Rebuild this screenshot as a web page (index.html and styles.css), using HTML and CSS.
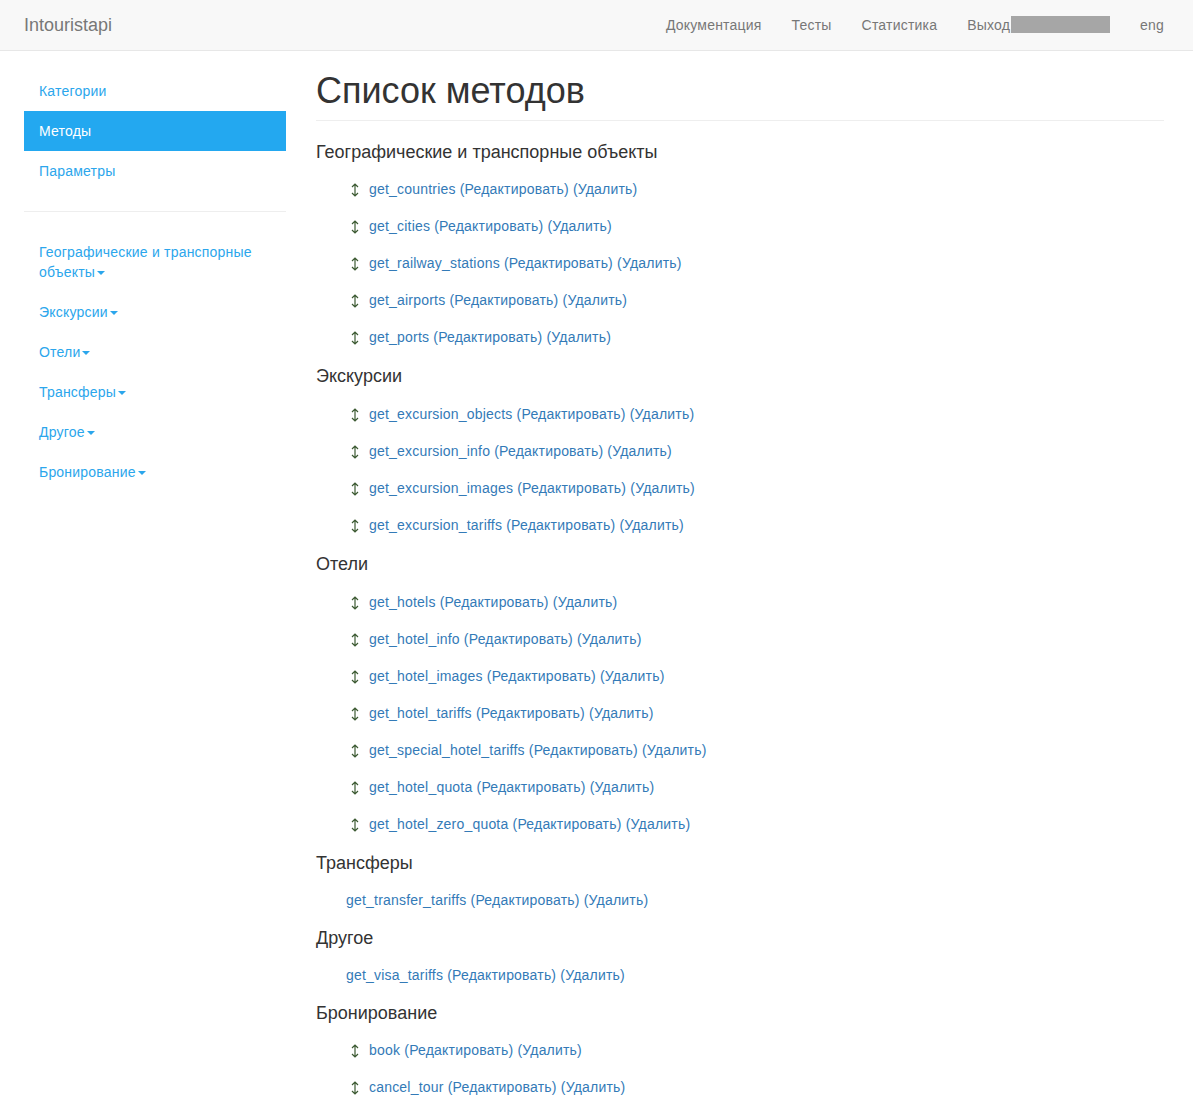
FILE: index.html
```html
<!DOCTYPE html>
<html lang="ru">
<head>
  <meta charset="UTF-8" />
  <title>Intouristapi</title>
  <link rel="stylesheet" href="styles.css">
</head>
<body>

  <nav class="navbar">
    <a class="brand" href="#">Intouristapi</a>
    <ul class="nav-right">
      <li><a href="#">Документация</a></li>
      <li><a href="#">Тесты</a></li>
      <li><a href="#">Статистика</a></li>
      <li><a href="#">Выход<span class="user-mask"></span></a></li>
      <li><a href="#">eng</a></li>
    </ul>
  </nav>

  <div class="layout">
    <aside class="sidebar">
      <ul class="pills">
        <li><a href="#">Категории</a></li>
        <li class="active"><a href="#">Методы</a></li>
        <li><a href="#">Параметры</a></li>
      </ul>
      <hr class="divider" />
      <ul class="pills">
        <li><a href="#">Географические и транспорные объекты<span class="caret"></span></a></li>
        <li><a href="#">Экскурсии<span class="caret"></span></a></li>
        <li><a href="#">Отели<span class="caret"></span></a></li>
        <li><a href="#">Трансферы<span class="caret"></span></a></li>
        <li><a href="#">Другое<span class="caret"></span></a></li>
        <li><a href="#">Бронирование<span class="caret"></span></a></li>
      </ul>
    </aside>

    <main class="content">
      <div class="page-header">
        <h1>Список методов</h1>
      </div>

      <h4>Географические и транспорные объекты</h4>
      <ul class="methods">
        <li><svg class="move" viewBox="0 0 8 14"><path d="M4 1v12M1 4l3-3 3 3M1 10l3 3 3-3"/></svg><a href="#">get_countries</a> <a href="#">(Редактировать)</a> <a href="#">(Удалить)</a></li>
        <li><svg class="move" viewBox="0 0 8 14"><path d="M4 1v12M1 4l3-3 3 3M1 10l3 3 3-3"/></svg><a href="#">get_cities</a> <a href="#">(Редактировать)</a> <a href="#">(Удалить)</a></li>
        <li><svg class="move" viewBox="0 0 8 14"><path d="M4 1v12M1 4l3-3 3 3M1 10l3 3 3-3"/></svg><a href="#">get_railway_stations</a> <a href="#">(Редактировать)</a> <a href="#">(Удалить)</a></li>
        <li><svg class="move" viewBox="0 0 8 14"><path d="M4 1v12M1 4l3-3 3 3M1 10l3 3 3-3"/></svg><a href="#">get_airports</a> <a href="#">(Редактировать)</a> <a href="#">(Удалить)</a></li>
        <li><svg class="move" viewBox="0 0 8 14"><path d="M4 1v12M1 4l3-3 3 3M1 10l3 3 3-3"/></svg><a href="#">get_ports</a> <a href="#">(Редактировать)</a> <a href="#">(Удалить)</a></li>
      </ul>

      <h4>Экскурсии</h4>
      <ul class="methods">
        <li><svg class="move" viewBox="0 0 8 14"><path d="M4 1v12M1 4l3-3 3 3M1 10l3 3 3-3"/></svg><a href="#">get_excursion_objects</a> <a href="#">(Редактировать)</a> <a href="#">(Удалить)</a></li>
        <li><svg class="move" viewBox="0 0 8 14"><path d="M4 1v12M1 4l3-3 3 3M1 10l3 3 3-3"/></svg><a href="#">get_excursion_info</a> <a href="#">(Редактировать)</a> <a href="#">(Удалить)</a></li>
        <li><svg class="move" viewBox="0 0 8 14"><path d="M4 1v12M1 4l3-3 3 3M1 10l3 3 3-3"/></svg><a href="#">get_excursion_images</a> <a href="#">(Редактировать)</a> <a href="#">(Удалить)</a></li>
        <li><svg class="move" viewBox="0 0 8 14"><path d="M4 1v12M1 4l3-3 3 3M1 10l3 3 3-3"/></svg><a href="#">get_excursion_tariffs</a> <a href="#">(Редактировать)</a> <a href="#">(Удалить)</a></li>
      </ul>

      <h4>Отели</h4>
      <ul class="methods">
        <li><svg class="move" viewBox="0 0 8 14"><path d="M4 1v12M1 4l3-3 3 3M1 10l3 3 3-3"/></svg><a href="#">get_hotels</a> <a href="#">(Редактировать)</a> <a href="#">(Удалить)</a></li>
        <li><svg class="move" viewBox="0 0 8 14"><path d="M4 1v12M1 4l3-3 3 3M1 10l3 3 3-3"/></svg><a href="#">get_hotel_info</a> <a href="#">(Редактировать)</a> <a href="#">(Удалить)</a></li>
        <li><svg class="move" viewBox="0 0 8 14"><path d="M4 1v12M1 4l3-3 3 3M1 10l3 3 3-3"/></svg><a href="#">get_hotel_images</a> <a href="#">(Редактировать)</a> <a href="#">(Удалить)</a></li>
        <li><svg class="move" viewBox="0 0 8 14"><path d="M4 1v12M1 4l3-3 3 3M1 10l3 3 3-3"/></svg><a href="#">get_hotel_tariffs</a> <a href="#">(Редактировать)</a> <a href="#">(Удалить)</a></li>
        <li><svg class="move" viewBox="0 0 8 14"><path d="M4 1v12M1 4l3-3 3 3M1 10l3 3 3-3"/></svg><a href="#">get_special_hotel_tariffs</a> <a href="#">(Редактировать)</a> <a href="#">(Удалить)</a></li>
        <li><svg class="move" viewBox="0 0 8 14"><path d="M4 1v12M1 4l3-3 3 3M1 10l3 3 3-3"/></svg><a href="#">get_hotel_quota</a> <a href="#">(Редактировать)</a> <a href="#">(Удалить)</a></li>
        <li><svg class="move" viewBox="0 0 8 14"><path d="M4 1v12M1 4l3-3 3 3M1 10l3 3 3-3"/></svg><a href="#">get_hotel_zero_quota</a> <a href="#">(Редактировать)</a> <a href="#">(Удалить)</a></li>
      </ul>

      <h4>Трансферы</h4>
      <ul class="methods">
        <li class="plain"><a href="#">get_transfer_tariffs</a> <a href="#">(Редактировать)</a> <a href="#">(Удалить)</a></li>
      </ul>

      <h4>Другое</h4>
      <ul class="methods">
        <li class="plain"><a href="#">get_visa_tariffs</a> <a href="#">(Редактировать)</a> <a href="#">(Удалить)</a></li>
      </ul>

      <h4>Бронирование</h4>
      <ul class="methods">
        <li><svg class="move" viewBox="0 0 8 14"><path d="M4 1v12M1 4l3-3 3 3M1 10l3 3 3-3"/></svg><a href="#">book</a> <a href="#">(Редактировать)</a> <a href="#">(Удалить)</a></li>
        <li><svg class="move" viewBox="0 0 8 14"><path d="M4 1v12M1 4l3-3 3 3M1 10l3 3 3-3"/></svg><a href="#">cancel_tour</a> <a href="#">(Редактировать)</a> <a href="#">(Удалить)</a></li>
      </ul>
    </main>
  </div>

</body>
</html>
```

FILE: styles.css
```css
body {
  margin: 0;
  font-family: 'Liberation Sans', Arial, sans-serif;
  font-size: 14px;
  line-height: 20px;
  letter-spacing: 0.2px;
  color: #333;
  background-color: #fff;
}

a {
  text-decoration: none;
}

ul {
  list-style: none;
  margin: 0;
  padding: 0;
}

/* top bar */
.navbar {
  display: flex;
  align-items: center;
  justify-content: space-between;
  height: 50px;
  padding: 0 14px 0 24px;
  background-color: #f8f8f8;
  border-bottom: 1px solid #e7e7e7;
}

.brand {
  font-size: 18px;
  letter-spacing: 0;
  color: #777;
}

.nav-right {
  display: flex;
}

.nav-right a {
  display: block;
  padding: 15px;
  color: #777;
}

.user-mask {
  display: inline-block;
  width: 99px;
  height: 17px;
  margin-left: 1px;
  vertical-align: -3px;
  background-color: #a6a6a6;
}

/* page body */
.layout {
  display: flex;
  padding: 0 29px 0 24px;
}

.sidebar {
  width: 262px;
  flex-shrink: 0;
  padding-top: 20px;
}

.pills a {
  display: block;
  padding: 10px 15px;
  color: #2ba6ec;
}

.pills .active a {
  background-color: #23a8f0;
  color: #fff;
}

.divider {
  margin: 20px 0;
  border: 0;
  border-top: 1px solid #eee;
}

.caret {
  display: inline-block;
  width: 0;
  height: 0;
  margin-left: 2px;
  vertical-align: middle;
  border-top: 4px solid;
  border-left: 4px solid transparent;
  border-right: 4px solid transparent;
}

.content {
  flex: 1;
  margin-left: 30px;
}

.page-header {
  padding-bottom: 9px;
  margin-bottom: 21px;
  border-bottom: 1px solid #eee;
}

h1 {
  margin: 20px 0 0;
  font-size: 36px;
  font-weight: normal;
  line-height: 1.1;
  letter-spacing: 0;
}

h4 {
  margin: 10px 0 9px;
  padding-top: 1px;
  font-size: 18px;
  font-weight: normal;
  line-height: 1.1;
  letter-spacing: 0;
}

.methods {
  padding-left: 30px;
  margin-bottom: 10px;
}

.methods li {
  padding: 8px 0 9px;
}

.methods li.plain {
  padding: 7px 0 8px;
}

.methods a {
  color: #337ab7;
}

.move {
  width: 8px;
  height: 14px;
  margin: 0 10px 0 5px;
  vertical-align: -3px;
  fill: none;
  stroke: #3c5a32;
  stroke-width: 1.2;
}
```
